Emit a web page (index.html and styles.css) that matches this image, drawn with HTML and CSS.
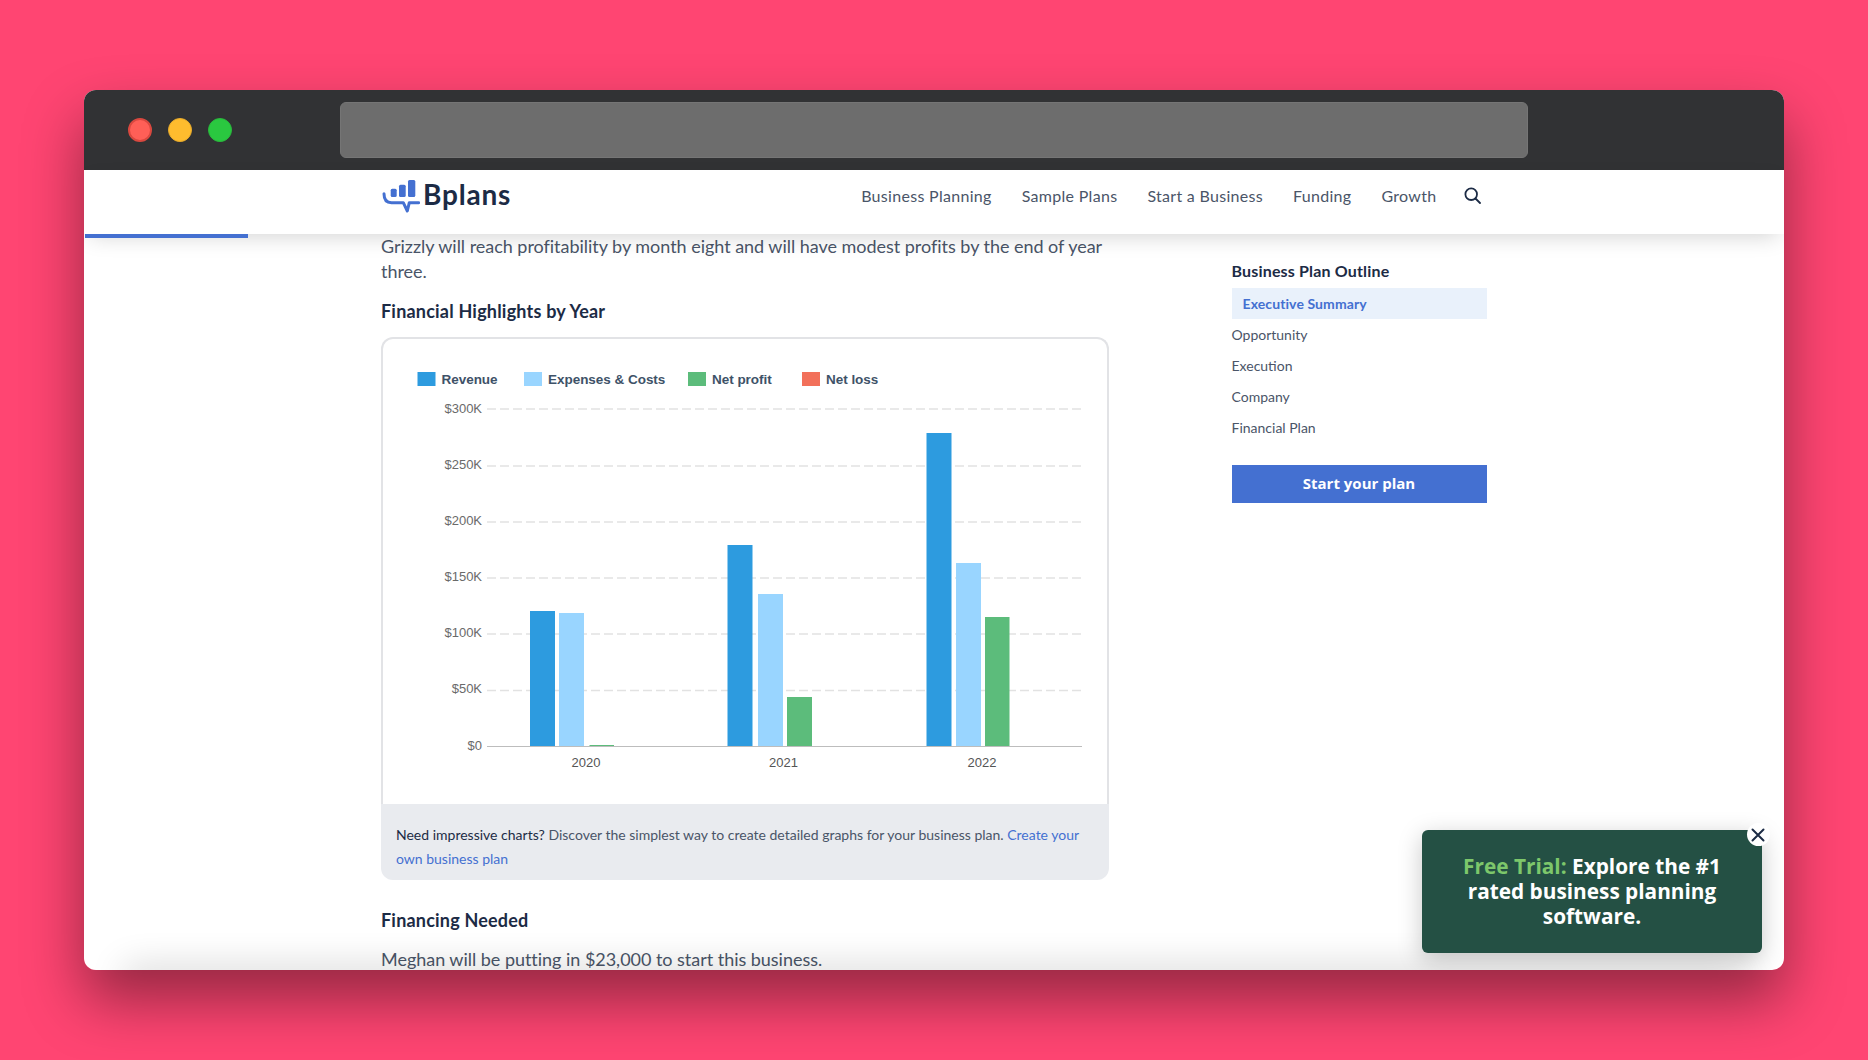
FILE: index.html
```html
<!DOCTYPE html>
<html lang="en">
<head>
  <meta charset="UTF-8">
  <meta name="viewport" content="width=device-width, initial-scale=1.0">
  <title>Bplans</title>
  <link rel="stylesheet" href="styles.css">
</head>
<body>
  <div class="window">
    <div class="titlebar">
      <div class="lights">
        <span class="light red"></span>
        <span class="light yellow"></span>
        <span class="light green"></span>
      </div>
      <div class="address"></div>
    </div>

    <header class="site-header">
      <a class="logo" href="#">
        <svg class="logo-mark" width="38" height="34" viewBox="0 0 38 34">
          <rect class="logo-bar" x="8.700" y="9.700" width="6" height="8.300" rx="1.500"/>
          <rect class="logo-bar" x="17" y="5.700" width="6.700" height="12.300" rx="1.500"/>
          <rect class="logo-bar" x="26" y="1" width="7.300" height="17" rx="1.500"/>
          <path class="logo-bubble" d="M2 14.700c0 5.500 2.500 9 7.500 9h11.800l4 8.300 2-8.300h9.400"/>
        </svg>
        <span class="logo-text">Bplans</span>
      </a>
      <nav class="site-nav">
        <a href="#">Business Planning</a>
        <a href="#">Sample Plans</a>
        <a href="#">Start a Business</a>
        <a href="#">Funding</a>
        <a href="#">Growth</a>
        <svg class="search-icon" width="17" height="17" viewBox="0 0 17 17">
          <circle cx="7.200" cy="7.200" r="5.800"/>
          <path d="M11.500 11.500l4.500 4.500"/>
        </svg>
      </nav>
      <div class="progress"></div>
    </header>

    <div class="page">
      <main class="article">
        <p>Grizzly will reach profitability by month eight and will have modest profits by the end of year three.</p>
        <h3>Financial Highlights by Year</h3>

        <div class="chart-card">
          <div class="chart-frame">
            <svg class="chart" width="724" height="465" viewBox="383 339 724 465">
              <!-- legend -->
              <rect class="revenue" x="417.500" y="372" width="18" height="14"/>
              <text class="legend-label" x="441.500" y="384">Revenue</text>
              <rect class="expenses" x="524" y="372" width="18" height="14"/>
              <text class="legend-label" x="548" y="384">Expenses &amp; Costs</text>
              <rect class="profit" x="688" y="372" width="18" height="14"/>
              <text class="legend-label" x="712" y="384">Net profit</text>
              <rect class="loss" x="802" y="372" width="18" height="14"/>
              <text class="legend-label" x="826" y="384">Net loss</text>

              <!-- grid -->
              <line class="grid" x1="487" x2="1082" y1="409" y2="409"/>
              <line class="grid" x1="487" x2="1082" y1="466" y2="466"/>
              <line class="grid" x1="487" x2="1082" y1="522" y2="522"/>
              <line class="grid" x1="487" x2="1082" y1="578" y2="578"/>
              <line class="grid" x1="487" x2="1082" y1="634" y2="634"/>
              <line class="grid" x1="487" x2="1082" y1="690.500" y2="690.500"/>

              <text class="axis-label" x="482" y="413">$300K</text>
              <text class="axis-label" x="482" y="469">$250K</text>
              <text class="axis-label" x="482" y="525">$200K</text>
              <text class="axis-label" x="482" y="581">$150K</text>
              <text class="axis-label" x="482" y="637">$100K</text>
              <text class="axis-label" x="482" y="693">$50K</text>
              <text class="axis-label" x="482" y="750">$0</text>

              <!-- 2020 -->
              <rect class="revenue" x="530" y="611" width="25" height="135"/>
              <rect class="expenses" x="559" y="613" width="25" height="133"/>
              <rect class="profit" x="589.500" y="745" width="24.500" height="1"/>
              <!-- 2021 -->
              <rect class="revenue" x="727.500" y="545" width="25" height="201"/>
              <rect class="expenses" x="758" y="594" width="25" height="152"/>
              <rect class="profit" x="787" y="697" width="25" height="49"/>
              <!-- 2022 -->
              <rect class="revenue" x="926.500" y="433" width="25" height="313"/>
              <rect class="expenses" x="956" y="563" width="25" height="183"/>
              <rect class="profit" x="985" y="617" width="24.500" height="129"/>

              <line class="baseline" x1="487" x2="1082" y1="746.500" y2="746.500"/>

              <text class="year-label" x="586" y="767">2020</text>
              <text class="year-label" x="783.500" y="767">2021</text>
              <text class="year-label" x="982" y="767">2022</text>
            </svg>
          </div>
          <div class="chart-note">
            <strong>Need impressive charts?</strong> Discover the simplest way to create detailed graphs for your business plan. <a href="#">Create your own business plan</a>
          </div>
        </div>

        <h3 class="financing">Financing Needed</h3>
        <p>Meghan will be putting in $23,000 to start this business.</p>
      </main>

      <aside class="sidebar">
        <h4>Business Plan Outline</h4>
        <ul class="outline">
          <li class="active"><a href="#">Executive Summary</a></li>
          <li><a href="#">Opportunity</a></li>
          <li><a href="#">Execution</a></li>
          <li><a href="#">Company</a></li>
          <li><a href="#">Financial Plan</a></li>
        </ul>
        <a class="start-btn" href="#">Start your plan</a>
      </aside>
    </div>

    <div class="promo">
      <span class="promo-close">
        <svg width="14" height="14" viewBox="0 0 14 14"><path d="M1.500 1.500l11 11M12.500 1.500l-11 11"/></svg>
      </span>
      <span class="promo-green">Free Trial:</span> Explore the #1 rated business planning software.
    </div>
  </div>
</body>
</html>
```

FILE: styles.css
```css
:root {
  --blue: #4470d1;
  --navy: #1c2b45;
  --text: #4a5568;
}

* {
  box-sizing: border-box;
}

body {
  margin: 0;
  padding: 90px 84px;
  height: 1060px;
  overflow: hidden;
  background-color: #ff4572;
  font-family: Lato, sans-serif;
  color: var(--text);
}

a {
  text-decoration: none;
  color: inherit;
}

body::before {
  content: "";
  position: absolute;
  left: 84px;
  top: 90px;
  width: 1700px;
  height: 880px;
  border-radius: 12px;
  box-shadow: 0 30px 60px rgba(0, 0, 0, 0.42);
}

.window {
  position: relative;
  height: 880px;
  border-radius: 12px;
  overflow: hidden;
  background-color: #fff;
  display: flex;
  flex-direction: column;
}

/* grey fade along the bottom edge */
.window::after {
  content: "";
  position: absolute;
  left: 40px;
  right: 40px;
  bottom: -20px;
  height: 20px;
  box-shadow: 0 -2px 36px rgba(0, 0, 0, 0.2);
  pointer-events: none;
}

/* browser chrome */
.titlebar {
  height: 80px;
  flex: none;
  background-color: #313234;
  display: flex;
  align-items: center;
  padding-left: 44px;
}

.lights {
  display: flex;
  gap: 16px;
  width: 212px;
}

.light {
  width: 24px;
  height: 24px;
  border-radius: 50%;
}

.light.red {
  background-color: #ff5f57;
  border: 2px solid #d9483f;
}

.light.yellow {
  background-color: #febc2e;
  border: 1px solid #e8ab2b;
}

.light.green {
  background-color: #2ac840;
  border: 1px solid #29b83c;
}

.address {
  width: 1188px;
  height: 56px;
  border-radius: 6px;
  background-color: #6d6d6d;
  border: 1px solid #757575;
}

/* site header */
.site-header {
  position: relative;
  z-index: 2;
  flex: none;
  height: 64px;
  background-color: #fff;
  display: flex;
  align-items: center;
  padding: 0 303px 14px 298px;
  box-shadow: 0 8px 22px -6px rgba(0, 0, 0, 0.18);
}

.logo {
  display: flex;
  align-items: center;
  gap: 3px;
}

.logo-mark {
  margin-top: 2px;
}

.logo-bar {
  fill: var(--blue);
}

.logo-bubble {
  fill: none;
  stroke: var(--blue);
  stroke-width: 3;
  stroke-linecap: round;
  stroke-linejoin: round;
}

.logo-text {
  font-size: 28px;
  font-weight: 700;
  letter-spacing: 0.8px;
  color: var(--navy);
  margin-bottom: 2px;
}

.site-nav {
  margin-left: auto;
  display: flex;
  align-items: center;
  gap: 30px;
  font-size: 16px;
  letter-spacing: 0.3px;
}

.search-icon {
  margin-left: -2.500px;
  fill: none;
  stroke: var(--navy);
  stroke-width: 1.800;
  stroke-linecap: round;
}

.progress {
  position: absolute;
  left: 1px;
  top: 64px;
  width: 163px;
  height: 4px;
  background-color: var(--blue);
}

/* page body */
.page {
  flex: 1;
  min-height: 0;
  display: flex;
  padding-left: 297px;
}

.article {
  width: 728px;
  font-size: 18px;
  line-height: 25px;
  letter-spacing: -0.03px;
}

.article p {
  margin: 0;
}

.article h3 {
  margin: 15px 0 13px;
  font-size: 18px;
  line-height: 25px;
  font-weight: 700;
  letter-spacing: 0.2px;
  color: var(--navy);
}

.chart-card {
  height: 543px;
  display: flex;
  flex-direction: column;
}

.chart-frame {
  height: 467px;
  flex: none;
  border: 2px solid #e2e3e6;
  border-bottom: none;
  border-radius: 12px 12px 0 0;
}

.chart {
  display: block;
}

.chart .revenue { fill: #2d9bdf; }
.chart .expenses { fill: #99d5ff; }
.chart .profit { fill: #5cbc7b; }
.chart .loss { fill: #f2705a; }

.chart .grid {
  stroke: #e2e2e2;
  stroke-width: 1.500;
  stroke-dasharray: 9 4;
}

.chart .baseline {
  stroke: #bdbdbd;
  stroke-width: 1;
}

.legend-label {
  font-family: "Liberation Sans", sans-serif;
  font-size: 13.500px;
  font-weight: 700;
  fill: #3e5268;
}

.axis-label {
  font-family: "Liberation Sans", sans-serif;
  font-size: 13px;
  fill: #6a6a6a;
  text-anchor: end;
}

.year-label {
  font-family: "Liberation Sans", sans-serif;
  font-size: 13px;
  fill: #555;
  text-anchor: middle;
}

.chart-note {
  flex: 1;
  padding: 19px 14px 0 15px;
  background-color: #e9ebef;
  border-radius: 0 0 12px 12px;
  font-size: 14px;
  line-height: 24px;
  letter-spacing: 0;
}

.chart-note strong {
  font-weight: 400;
  color: var(--navy);
}

.chart-note a {
  color: var(--blue);
}

.article .financing {
  margin: 28px 0 14px;
}

/* sidebar */
.sidebar {
  width: 255px;
  margin-left: 122.500px;
  padding-top: 25px;
}

.sidebar h4 {
  margin: 0 0 5px;
  font-size: 16px;
  line-height: 24px;
  font-weight: 700;
  letter-spacing: 0.17px;
  color: var(--navy);
}

.outline {
  list-style: none;
  margin: 0;
  padding: 0;
  font-size: 14px;
}

.outline li {
  height: 31px;
  line-height: 31px;
}

.outline li.active {
  padding-left: 11px;
  background-color: #e9f1fb;
  color: var(--blue);
  font-weight: 700;
  letter-spacing: 0.1px;
}

.start-btn {
  display: block;
  margin-top: 22px;
  height: 38px;
  line-height: 37px;
  text-align: center;
  background-color: var(--blue);
  color: #fff;
  font-family: "Open Sans", sans-serif;
  font-weight: 700;
  font-size: 15px;
}

/* promo popup */
.promo {
  position: absolute;
  z-index: 3;
  left: 1338px;
  top: 740px;
  width: 340px;
  height: 123px;
  padding: 24px 36px 0;
  border-radius: 6px;
  background-color: #245044;
  box-shadow: 0 6px 24px rgba(0, 0, 0, 0.22);
  color: #fff;
  font-family: "Open Sans", sans-serif;
  font-size: 20.800px;
  font-weight: 700;
  line-height: 25px;
  text-align: center;
}

.promo-green {
  color: #7dc76b;
}

.promo-close {
  position: absolute;
  right: -7.500px;
  top: -7px;
  width: 23px;
  height: 23px;
  border-radius: 50%;
  background-color: #fff;
  display: flex;
  align-items: center;
  justify-content: center;
}

.promo-close path {
  stroke: #1c2b45;
  stroke-width: 2;
  stroke-linecap: round;
  fill: none;
}
```
